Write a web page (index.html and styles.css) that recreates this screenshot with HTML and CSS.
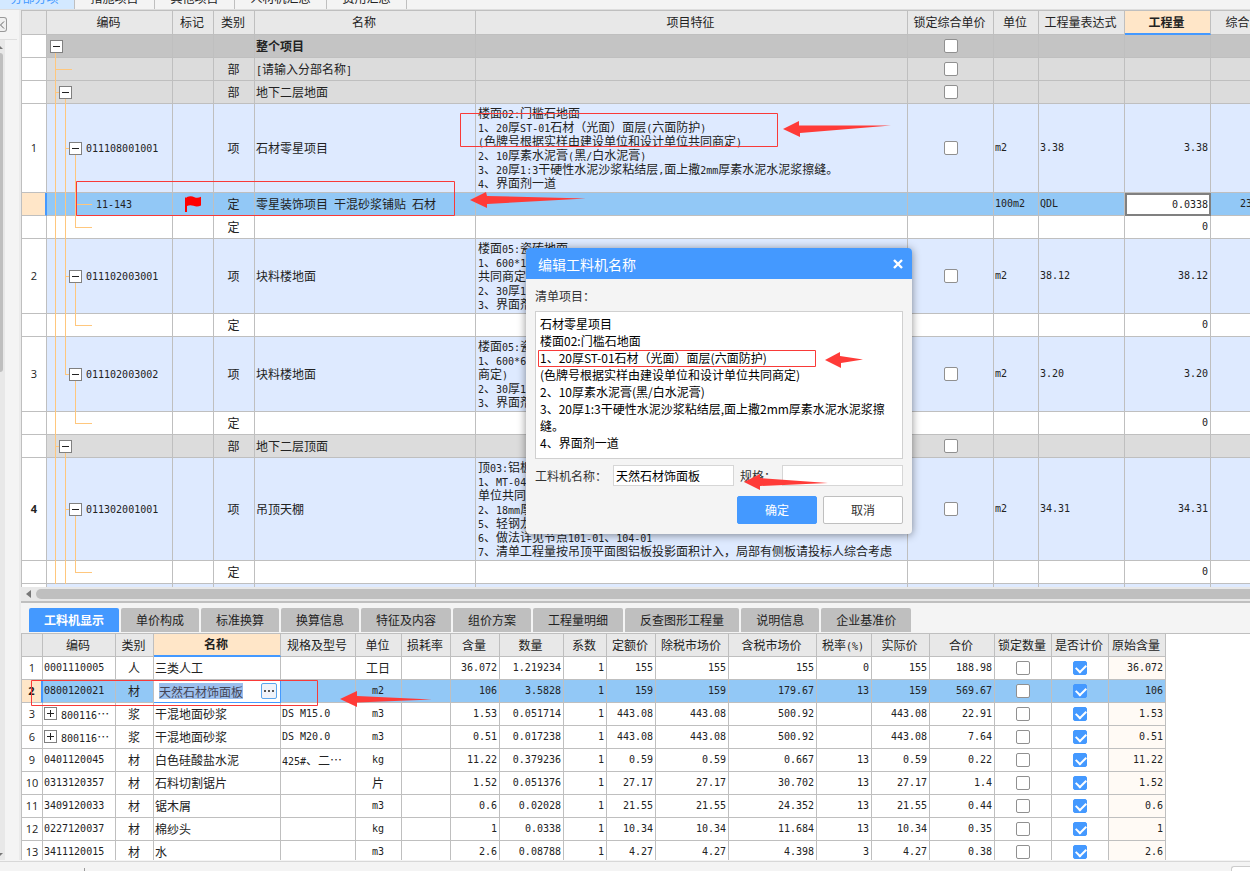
FILE: index.html
```html
<!DOCTYPE html>
<html lang="zh-CN">
<head>
<meta charset="utf-8">
<title>分部分项</title>
<link rel="stylesheet" href="styles.css">
</head>
<body>
<div class="app">
<nav class="top-tabs">
<button class="on">分部分项</button><button>措施项目</button><button>其他项目</button><button class="wide">人材机汇总</button><button>费用汇总</button>
</nav>
<div class="body">
<aside class="side">
<button class="collapse" aria-label="收起"><svg width="6" height="8" viewBox="0 0 6 8"><path d="M4 0.5L0.5 4L4 7.5" fill="none" stroke="#666"/></svg></button>
<div class="track"><svg width="3" height="3" viewBox="0 0 3 3"><path d="M0 0L3 3H0Z" fill="#777"/></svg><div class="thumb"></div><svg class="down" width="3" height="3" viewBox="0 0 3 3"><path d="M0 0H3L0 3Z" fill="#777"/></svg></div>
</aside>
<main class="main">
<section class="upper">
<table class="grid bill">
<colgroup><col class="w25"><col class="w126"><col class="w41"><col class="w41"><col class="w221"><col class="w432"><col class="w86"><col class="w45"><col class="w86"><col class="w86"><col class="w80"></colgroup>
<thead><tr><th></th><th>编码</th><th>标记</th><th>类别</th><th>名称</th><th>项目特征</th><th>锁定综合单价</th><th>单位</th><th>工程量表达式</th><th class="hot">工程量</th><th>综合单价</th></tr></thead>
<tbody>
<tr class="project"><td class="no"></td><td class="tree root"><div class="code l0"><button class="box" aria-label="折叠"></button></div></td><td></td><td></td><td><b>整个项目</b></td><td></td><td class="c"><input type="checkbox" aria-label="锁定综合单价"></td><td></td><td></td><td></td><td></td></tr>
<tr class="dept"><td class="no"></td><td class="tree leaf1"></td><td></td><td class="c">部</td><td><span class="n">[</span>请输入分部名称<span class="n">]</span></td><td></td><td class="c"><input type="checkbox" aria-label="锁定综合单价"></td><td></td><td></td><td></td><td></td></tr>
<tr class="dept"><td class="no"></td><td class="tree node1"><div class="code l1"><button class="box" aria-label="折叠"></button></div></td><td></td><td class="c">部</td><td>地下二层地面</td><td></td><td class="c"><input type="checkbox" aria-label="锁定综合单价"></td><td></td><td></td><td></td><td></td></tr>
<tr class="item h89"><td class="no">1</td><td class="tree node2"><div class="code l2"><button class="box" aria-label="折叠"></button><span class="n">011108001001</span></div></td><td></td><td class="c">项</td><td>石材零星项目</td><td class="feature">楼面<span class="n">02:</span>门槛石地面<br><span class="n">1</span>、<span class="n">20</span>厚<span class="n">ST-01</span>石材（光面）面层<span class="n">(</span>六面防护<span class="n">)</span><br><span class="n">(</span>色牌号根据实样由建设单位和设计单位共同商定<span class="n">)</span><br><span class="n">2</span>、<span class="n">10</span>厚素水泥膏<span class="n">(</span>黑<span class="n">/</span>白水泥膏<span class="n">)</span><br><span class="n">3</span>、<span class="n">20</span>厚<span class="n">1:3</span>干硬性水泥沙浆粘结层<span class="n">,</span>面上撒<span class="n">2mm</span>厚素水泥水泥浆擦缝。<br><span class="n">4</span>、界面剂一道</td><td class="c"><input type="checkbox" aria-label="锁定综合单价"></td><td class="n">m2</td><td class="n">3.38</td><td class="n r">3.38</td><td></td></tr>
<tr class="selected"><td class="no"></td><td class="tree leaf3"><div class="code l3"><span class="n">11-143</span></div></td><td class="c"><svg class="flag" width="18" height="16" viewBox="0 0 18 16"><path d="M1 1.5H3V16H1Z M3 1C6-0.2 8 0 10.500 1.200C13 2.300 15 1.600 17 0.800V9.500C14.500 10.700 12 11 9.500 9.800C7 8.800 5 9 3 10Z" fill="#f00"/></svg></td><td class="c">定</td><td>零星装饰项目<span class="n"> </span>干混砂浆铺贴<span class="n"> </span>石材</td><td></td><td></td><td class="n">100m2</td><td class="n">QDL</td><td class="n r focus">0.0338</td><td class="n peek">23</td></tr>
<tr><td class="no"></td><td class="tree end3"></td><td></td><td class="c">定</td><td></td><td></td><td></td><td></td><td></td><td class="n r">0</td><td></td></tr>
<tr class="item h75"><td class="no">2</td><td class="tree node2"><div class="code l2"><button class="box" aria-label="折叠"></button><span class="n">011102003001</span></div></td><td></td><td class="c">项</td><td>块料楼地面</td><td class="feature">楼面<span class="n">05:</span>瓷砖地面<br><span class="n">1</span>、<span class="n">600*1</span><br>共同商定<span class="n">)</span><br><span class="n">2</span>、<span class="n">30</span>厚<span class="n">1</span><br><span class="n">3</span>、界面剂</td><td class="c"><input type="checkbox" aria-label="锁定综合单价"></td><td class="n">m2</td><td class="n">38.12</td><td class="n r">38.12</td><td></td></tr>
<tr><td class="no"></td><td class="tree end3"></td><td></td><td class="c">定</td><td></td><td></td><td></td><td></td><td></td><td class="n r">0</td><td></td></tr>
<tr class="item h75"><td class="no">3</td><td class="tree last2"><div class="code l2"><button class="box" aria-label="折叠"></button><span class="n">011102003002</span></div></td><td></td><td class="c">项</td><td>块料楼地面</td><td class="feature">楼面<span class="n">05:</span>瓷砖地面<br><span class="n">1</span>、<span class="n">600*6</span><br>商定<span class="n">)</span><br><span class="n">2</span>、<span class="n">30</span>厚<span class="n">1</span><br><span class="n">3</span>、界面剂</td><td class="c"><input type="checkbox" aria-label="锁定综合单价"></td><td class="n">m2</td><td class="n">3.20</td><td class="n r">3.20</td><td></td></tr>
<tr><td class="no"></td><td class="tree end3only"></td><td></td><td class="c">定</td><td></td><td></td><td></td><td></td><td></td><td class="n r">0</td><td></td></tr>
<tr class="dept"><td class="no"></td><td class="tree node1"><div class="code l1"><button class="box" aria-label="折叠"></button></div></td><td></td><td class="c">部</td><td>地下二层顶面</td><td></td><td class="c"><input type="checkbox" aria-label="锁定综合单价"></td><td></td><td></td><td></td><td></td></tr>
<tr class="item h103"><td class="no strong">4</td><td class="tree node2"><div class="code l2"><button class="box" aria-label="折叠"></button><span class="n">011302001001</span></div></td><td></td><td class="c">项</td><td>吊顶天棚</td><td class="feature">顶<span class="n">03:</span>铝板<br><span class="n">1</span>、<span class="n">MT-04</span><br>单位共同<br><span class="n">2</span>、<span class="n">18mm</span>厚<br><span class="n">5</span>、轻钢龙<br><span class="n">6</span>、做法详见节点<span class="n">101-01</span>、<span class="n">104-01</span><br><span class="n">7</span>、清单工程量按吊顶平面图铝板投影面积计入，局部有侧板请投标人综合考虑</td><td class="c"><input type="checkbox" aria-label="锁定综合单价"></td><td class="n">m2</td><td class="n">34.31</td><td class="n r">34.31</td><td></td></tr>
<tr><td class="no"></td><td class="tree end3"></td><td></td><td class="c">定</td><td></td><td></td><td></td><td></td><td></td><td class="n r">0</td><td></td></tr>
<tr class="item"><td class="no"></td><td class="tree"></td><td></td><td></td><td></td><td></td><td></td><td></td><td></td><td></td><td></td></tr>
</tbody>
</table>
</section>
<div class="hscroll"><svg width="5" height="8" viewBox="0 0 5 8"><path d="M5 0V8L0 4Z" fill="#777"/></svg><div class="bar"></div></div>
<section class="lower">
<nav class="tabs">
<button class="on">工料机显示</button><button>单价构成</button><button>标准换算</button><button>换算信息</button><button>特征及内容</button><button>组价方案</button><button>工程量明细</button><button>反查图形工程量</button><button>说明信息</button><button>企业基准价</button>
</nav>
<div class="sheet">
<table class="grid res">
<colgroup><col class="w21"><col class="w73"><col class="w38"><col class="w127"><col class="w75"><col class="w46"><col class="w49"><col class="w49"><col class="w64"><col class="w43"><col class="w49"><col class="w73"><col class="w88"><col class="w55"><col class="w58"><col class="w65"><col class="w57"><col class="w57"><col class="w57"></colgroup>
<thead><tr><th></th><th>编码</th><th>类别</th><th class="hot">名称</th><th>规格及型号</th><th>单位</th><th>损耗率</th><th>含量</th><th>数量</th><th>系数</th><th>定额价</th><th>除税市场价</th><th>含税市场价</th><th>税率<span class="n">(%)</span></th><th>实际价</th><th>合价</th><th>锁定数量</th><th>是否计价</th><th>原始含量</th></tr></thead>
<tbody>
<tr><td class="no">1</td><td class="n">0001110005</td><td class="c">人</td><td>三类人工</td><td></td><td class="c">工日</td><td></td><td class="n r">36.072</td><td class="n r">1.219234</td><td class="n r">1</td><td class="n r">155</td><td class="n r">155</td><td class="n r">155</td><td class="n r">0</td><td class="n r">155</td><td class="n r">188.98</td><td class="c"><input type="checkbox" aria-label="锁定数量"></td><td class="c"><input type="checkbox" checked aria-label="是否计价"></td><td class="n r orig">36.072</td></tr>
<tr class="selected"><td class="no strong">2</td><td class="n">0800120021</td><td class="c">材</td><td class="edit"><div class="editor"><input type="text" value="天然石材饰面板" aria-label="名称"><button aria-label="更多"><i></i><i></i><i></i></button></div></td><td></td><td class="c n">m2</td><td></td><td class="n r">106</td><td class="n r">3.5828</td><td class="n r">1</td><td class="n r">159</td><td class="n r">159</td><td class="n r">179.67</td><td class="n r">13</td><td class="n r">159</td><td class="n r">569.67</td><td class="c"><input type="checkbox" aria-label="锁定数量"></td><td class="c"><input type="checkbox" checked aria-label="是否计价"></td><td class="n r">106</td></tr>
<tr><td class="no">3</td><td><div class="code"><button class="box plus" aria-label="展开"></button><span><span class="n">800116</span>⋯</span></div></td><td class="c">浆</td><td>干混地面砂浆</td><td class="n">DS M15.0</td><td class="c n">m3</td><td></td><td class="n r">1.53</td><td class="n r">0.051714</td><td class="n r">1</td><td class="n r">443.08</td><td class="n r">443.08</td><td class="n r">500.92</td><td></td><td class="n r">443.08</td><td class="n r">22.91</td><td class="c"><input type="checkbox" aria-label="锁定数量"></td><td class="c"><input type="checkbox" checked aria-label="是否计价"></td><td class="n r orig">1.53</td></tr>
<tr><td class="no">6</td><td><div class="code"><button class="box plus" aria-label="展开"></button><span><span class="n">800116</span>⋯</span></div></td><td class="c">浆</td><td>干混地面砂浆</td><td class="n">DS M20.0</td><td class="c n">m3</td><td></td><td class="n r">0.51</td><td class="n r">0.017238</td><td class="n r">1</td><td class="n r">443.08</td><td class="n r">443.08</td><td class="n r">500.92</td><td></td><td class="n r">443.08</td><td class="n r">7.64</td><td class="c"><input type="checkbox" aria-label="锁定数量"></td><td class="c"><input type="checkbox" checked aria-label="是否计价"></td><td class="n r orig">0.51</td></tr>
<tr><td class="no">9</td><td class="n">0401120045</td><td class="c">材</td><td>白色硅酸盐水泥</td><td><span class="n">425#</span>、二⋯</td><td class="c n">kg</td><td></td><td class="n r">11.22</td><td class="n r">0.379236</td><td class="n r">1</td><td class="n r">0.59</td><td class="n r">0.59</td><td class="n r">0.667</td><td class="n r">13</td><td class="n r">0.59</td><td class="n r">0.22</td><td class="c"><input type="checkbox" aria-label="锁定数量"></td><td class="c"><input type="checkbox" checked aria-label="是否计价"></td><td class="n r orig">11.22</td></tr>
<tr><td class="no">10</td><td class="n">0313120357</td><td class="c">材</td><td>石料切割锯片</td><td></td><td class="c">片</td><td></td><td class="n r">1.52</td><td class="n r">0.051376</td><td class="n r">1</td><td class="n r">27.17</td><td class="n r">27.17</td><td class="n r">30.702</td><td class="n r">13</td><td class="n r">27.17</td><td class="n r">1.4</td><td class="c"><input type="checkbox" aria-label="锁定数量"></td><td class="c"><input type="checkbox" checked aria-label="是否计价"></td><td class="n r orig">1.52</td></tr>
<tr><td class="no">11</td><td class="n">3409120033</td><td class="c">材</td><td>锯木屑</td><td></td><td class="c n">m3</td><td></td><td class="n r">0.6</td><td class="n r">0.02028</td><td class="n r">1</td><td class="n r">21.55</td><td class="n r">21.55</td><td class="n r">24.352</td><td class="n r">13</td><td class="n r">21.55</td><td class="n r">0.44</td><td class="c"><input type="checkbox" aria-label="锁定数量"></td><td class="c"><input type="checkbox" checked aria-label="是否计价"></td><td class="n r orig">0.6</td></tr>
<tr><td class="no">12</td><td class="n">0227120037</td><td class="c">材</td><td>棉纱头</td><td></td><td class="c n">kg</td><td></td><td class="n r">1</td><td class="n r">0.0338</td><td class="n r">1</td><td class="n r">10.34</td><td class="n r">10.34</td><td class="n r">11.684</td><td class="n r">13</td><td class="n r">10.34</td><td class="n r">0.35</td><td class="c"><input type="checkbox" aria-label="锁定数量"></td><td class="c"><input type="checkbox" checked aria-label="是否计价"></td><td class="n r orig">1</td></tr>
<tr><td class="no">13</td><td class="n">3411120015</td><td class="c">材</td><td>水</td><td></td><td class="c n">m3</td><td></td><td class="n r">2.6</td><td class="n r">0.08788</td><td class="n r">1</td><td class="n r">4.27</td><td class="n r">4.27</td><td class="n r">4.398</td><td class="n r">3</td><td class="n r">4.27</td><td class="n r">0.38</td><td class="c"><input type="checkbox" aria-label="锁定数量"></td><td class="c"><input type="checkbox" checked aria-label="是否计价"></td><td class="n r orig">2.6</td></tr>
</tbody>
</table>
</div>
</section>
</main>
</div>
<footer class="status"><span class="tick"></span><span class="zoom"></span></footer>
</div>

<div class="dialog" role="dialog" aria-labelledby="dlg-title">
<header><h2 id="dlg-title">编辑工料机名称</h2><button class="close" aria-label="关闭"><svg width="10" height="10" viewBox="0 0 10 10"><path d="M1 1L9 9M9 1L1 9" stroke="#fff" stroke-width="2.400"/></svg></button></header>
<div class="dialog-body">
<label for="list">清单项目：</label>
<textarea id="list">石材零星项目
楼面02:门槛石地面
1、20厚ST-01石材（光面）面层(六面防护)
(色牌号根据实样由建设单位和设计单位共同商定)
2、10厚素水泥膏(黑/白水泥膏)
3、20厚1:3干硬性水泥沙浆粘结层,面上撒2mm厚素水泥水泥浆擦缝。
4、界面剂一道</textarea>
<div class="fields"><label for="name">工料机名称：</label><input id="name" type="text" value="天然石材饰面板"><label for="spec" class="spec">规格：</label><input id="spec" type="text"></div>
<div class="actions"><button class="ok">确定</button><button>取消</button></div>
</div>
</div>

<svg class="marks" aria-hidden="true">
<g fill="none" stroke="#f93a38"><path d="M76.500 181.500H454.500V215.500H76.500Z"/><path d="M460.500 113.500H777.500V146.500H460.500Z"/><path d="M538.500 350.500H815.500V366.500H538.500Z"/><path d="M31.500 680.500H317.500V705.500H31.500Z"/></g>
<g fill="#ff3b38"><path d="M783 129L799 121V125.500L891 125.500L800 133V137Z"/><path d="M470 200L486 192L487 196L586 198.500L487 204V208Z"/><path d="M825 360L840 352V356L863 359.500L841 363V368Z"/><path d="M744 482L760 474V478L828 483L760 486V490Z"/><path d="M340 699L357 691V696L432 699.500L357 702.500V707Z"/></g>
</svg>
</body>
</html>
```

FILE: styles.css
```css
* { box-sizing: border-box; }
:root {
  --line: #bfbfbf;
  --blue: #4499ff;
  --o: linear-gradient(#ffc77d, #ffc77d);
  --rule: linear-gradient(#bfbfbf, #bfbfbf);
}
body {
  margin: 0;
  overflow: hidden;
  background: #f4f4f4;
  color: #222;
  font: 12px/14px "Noto Sans CJK SC", sans-serif;
}
button, input, textarea { font: inherit; color: inherit; margin: 0; padding: 0; }
button { border: 0; background: none; }
.app { display: flex; flex-direction: column; height: 100vh; }

.top-tabs { display: flex; height: 10px; border-bottom: 1px solid #dedede; overflow: hidden; }
.top-tabs button {
  width: 80px; height: 22px; margin-top: -13px; flex: none;
  border-right: 1px solid var(--line);
}
.top-tabs .on { width: 75px; padding-right: 5px; background: #d3e9ff; color: var(--blue); }
.top-tabs .wide { width: 92px; }

.body { display: flex; flex: 1; min-height: 0; }
.side {
  flex: none; width: 21px; display: flex; flex-direction: column;
  border-right: 2px solid #ebebeb;
}
.collapse {
  width: 7px; height: 15px; margin: 7px 0; display: flex; align-items: center;
  border: 1px solid #999; border-left: 0; border-radius: 0 3px 3px 0; background: #f0f0f0;
}
.track {
  flex: 1; width: 17px; padding-top: 6px; border-top: 1px solid #dedede;
  background: linear-gradient(90deg, #e8e8e8 5px, #f4f4f4 5px);
  display: flex; flex-direction: column;
}
.thumb { width: 3px; height: 319px; margin-top: 4px; background: var(--line); border-radius: 0 3px 3px 0; }
.down { margin-top: auto; margin-bottom: 4px; }

.main { flex: 1; min-width: 0; display: flex; flex-direction: column; }
.upper { flex: 1; min-height: 0; overflow: hidden; border: 1px solid var(--line); border-width: 1px 0 0 1px; background: #fff; }

.grid { table-layout: fixed; width: 0; border-collapse: separate; border-spacing: 0; }
.grid th, .grid td {
  height: 23px; padding: 0 2px 1px 1px; overflow: hidden; white-space: nowrap;
  border: 1px solid var(--line); border-width: 0 1px 1px 0;
}
.grid th { background: #e8e8e8; font-weight: 400; padding: 0 2px 1px 0; }
.bill th { height: 24px; }
.grid th.hot { background: #ffe6c8; font-weight: 700; border-bottom: 2px solid var(--blue); }
.grid .c { text-align: center; }
.grid .c:has(input) { padding: 0; }
.grid .r { text-align: right; padding-right: 2px; }
.n { font-family: "DejaVu Sans Mono", "Noto Sans CJK SC", monospace; font-size: 10px; }
span.n { line-height: 1px; }
.grid .feature { line-height: 14px; padding: 0 0 0 2px; }
.grid .no { padding: 0; background: #fff; text-align: center; font-family: "Open Sans", sans-serif; font-size: 11px; }
.grid .strong { font-weight: 700; }
.grid .h89 td { height: 89px; }
.grid .h75 td { height: 75px; }
.grid .h103 td { height: 103px; }
.project { background: #c4c4c4; }
.dept { background: #dcdcdc; }
.item { background: #deeaff; }
.selected { background: #92c8f6; }
.grid .selected .no { background: #ffe6c8; border-right: 2px solid var(--blue); }
.grid .focus { background: #fff; border: 2px solid #808080; padding: 0 1px 0 0; }
.grid .peek { padding-left: 29px; }
.flag { display: block; margin: 0 auto; }
.orig { background: #fffaf5; }

.code { display: flex; align-items: center; gap: 4px; }
.grid .tree { padding: 0 0 1px; border-bottom: 0; background-repeat: no-repeat; background-image: var(--rule); background-position: 0 100%; background-size: 100% 1px; }
.l0 { padding-left: 3px; }
.l1 { padding-left: 12px; }
.l2 { padding-left: 22px; }
.l3 { padding-left: 49px; }
.grid .root { background-image: var(--o), var(--rule); background-position: 8px 100%, 0 100%; background-size: 1px 50%, 100% 1px; }
.grid .leaf1 { background-image: var(--o), var(--o), var(--rule); background-position: 8px 0, 8px 50%, 0 100%; background-size: 1px 100%, 17px 1px, 100% 1px; }
.grid .node1 { background-image: var(--o), var(--o), var(--o), var(--rule); background-position: 8px 0, 8px 50%, 18px 100%, 0 100%; background-size: 1px 100%, 6px 1px, 1px 50%, 100% 1px; }
.grid .node2 { background-image: var(--o), var(--o), var(--o), var(--o), var(--rule); background-position: 8px 0, 18px 0, 18px 50%, 28px 100%, 0 100%; background-size: 1px 100%, 1px 100%, 6px 1px, 1px 50%, 100% 1px; }
.grid .last2 { background-image: var(--o), var(--o), var(--o), var(--o), var(--rule); background-position: 8px 0, 18px 0, 18px 50%, 28px 100%, 0 100%; background-size: 1px 100%, 1px 50%, 6px 1px, 1px 50%, 100% 1px; }
.grid .leaf3 { background-image: var(--o), var(--o), var(--o), var(--o), var(--rule); background-position: 8px 0, 18px 0, 28px 0, 28px 50%, 0 100%; background-size: 1px 100%, 1px 100%, 1px 100%, 17px 1px, 100% 1px; }
.grid .end3 { background-image: var(--o), var(--o), var(--o), var(--o), var(--rule); background-position: 8px 0, 18px 0, 28px 0, 28px 50%, 0 100%; background-size: 1px 100%, 1px 100%, 1px 50%, 17px 1px, 100% 1px; }
.grid .end3only { background-image: var(--o), var(--o), var(--o), var(--rule); background-position: 8px 0, 28px 0, 28px 50%, 0 100%; background-size: 1px 100%, 1px 50%, 17px 1px, 100% 1px; }

.box {
  flex: none; width: 13px; height: 13px; border: 1px solid #808080;
  background: linear-gradient(#222, #222) center / 7px 1px no-repeat #fff;
}
.plus {
  background: linear-gradient(#222, #222) center / 7px 1px no-repeat,
    linear-gradient(#222, #222) center / 1px 7px no-repeat #fff;
}
input[type="checkbox"] {
  appearance: none; display: block; width: 14px; height: 14px; margin: 0 auto;
  border: 1px solid #909090; border-radius: 2px; background: #fff;
}
input[type="checkbox"]:checked { border-color: var(--blue); background: var(--blue); }
input[type="checkbox"]:checked::before {
  content: ""; display: block; width: 8px; height: 5px; margin: 2px;
  border: 2px solid #fff; border-width: 0 0 2px 2px; transform: rotate(-45deg);
}

.w21 { width: 21px; } .w25 { width: 25px; } .w38 { width: 38px; } .w41 { width: 41px; }
.w43 { width: 43px; } .w45 { width: 45px; } .w46 { width: 46px; } .w49 { width: 49px; }
.w55 { width: 55px; } .w57 { width: 57px; } .w58 { width: 58px; } .w64 { width: 64px; }
.w65 { width: 65px; } .w73 { width: 73px; } .w75 { width: 75px; } .w80 { width: 80px; }
.w86 { width: 86px; } .w88 { width: 88px; } .w126 { width: 126px; } .w127 { width: 127px; }
.w221 { width: 221px; } .w432 { width: 432px; }

.hscroll {
  flex: none; height: 16px; padding-left: 5px; display: flex; align-items: center; gap: 5px;
  background: #e8e8e8; border-bottom: 2px solid var(--line);
}
.bar { flex: 1; height: 10px; border-radius: 5px 0 0 5px; background: var(--line); }

.lower { flex: none; height: 257px; display: flex; flex-direction: column; }
.tabs { display: flex; gap: 2px; padding: 5px 8px 0; height: 30px; }
.tabs button { height: 24px; padding: 0 15px; background: var(--line); border-radius: 2px 2px 0 0; }
.tabs .on { background: var(--blue); color: #fff; font-weight: 700; }
.sheet { flex: 1; min-height: 0; overflow: hidden; background: #fff; border: 1px solid var(--line); border-width: 1px 0 0 1px; }

.grid .edit { padding: 0; border-color: var(--blue); background: #fff; }
.editor { display: flex; align-items: center; height: 22px; padding: 0 3px 0 5px; }
.editor input { flex: 1; width: 0; height: 16px; border: 0; background: linear-gradient(#9dc0ee, #9dc0ee) 0 0 / 84px 100% no-repeat; color: #445; }
.editor button { width: 16px; height: 16px; display: flex; align-items: center; justify-content: center; gap: 2px; border: 1px solid #5aa5ee; border-radius: 2px; background: #f0f3fa; }
.editor i { width: 2px; height: 2px; background: #555; }

.status { flex: none; height: 10px; margin-top: 1px; border-top: 1px solid #d8d8d8; display: flex; align-items: flex-end; justify-content: space-between; }
.tick { width: 1px; height: 3px; margin-left: 84px; background: #999; }
.zoom { width: 19px; height: 5px; border: 1px solid #ccc; border-width: 1px 0 0 1px; border-radius: 3px 0 0 0; background: #fff; }

.dialog {
  position: absolute; left: 526px; top: 248px; width: 386px;
  border-radius: 4px; background: #f4f4f4; box-shadow: 0 1px 8px rgba(0, 0, 0, 0.45);
}
.dialog header {
  display: flex; align-items: center; justify-content: space-between; height: 31px;
  padding: 0 9px 0 12px; border-radius: 4px 4px 0 0; background: var(--blue); color: #fff;
}
.dialog h2 { margin: 0; font-size: 14px; font-weight: 400; }
.close { display: flex; }
.dialog-body { display: flex; flex-direction: column; padding: 9px 9px 10px; color: #333; }
.dialog-body > label { line-height: 16px; }
textarea {
  height: 148px; margin-top: 7px; padding: 3px 12px 0 4px; border: 1px solid #d0d0d0; border-radius: 0;
  background: #fff; color: #000; line-height: 17px; resize: none; overflow: hidden; outline: 0;
}
.fields { display: flex; align-items: center; margin-top: 6px; }
.fields label { flex: none; width: 78px; }
.fields .spec { width: 48px; padding-left: 6px; }
.fields input { flex: 1; min-width: 0; height: 21px; padding: 0 2px; border: 1px solid #d6d6d6; background: #fff; color: #000; }
.actions { display: flex; justify-content: flex-end; gap: 6px; margin-top: 10px; }
.actions button { width: 80px; height: 28px; border: 1px solid var(--line); border-radius: 2px; background: #fff; }
.actions .ok { border-color: var(--blue); background: var(--blue); color: #fff; }

.marks { position: absolute; left: 0; top: 0; width: 100%; height: 100%; pointer-events: none; }
```
